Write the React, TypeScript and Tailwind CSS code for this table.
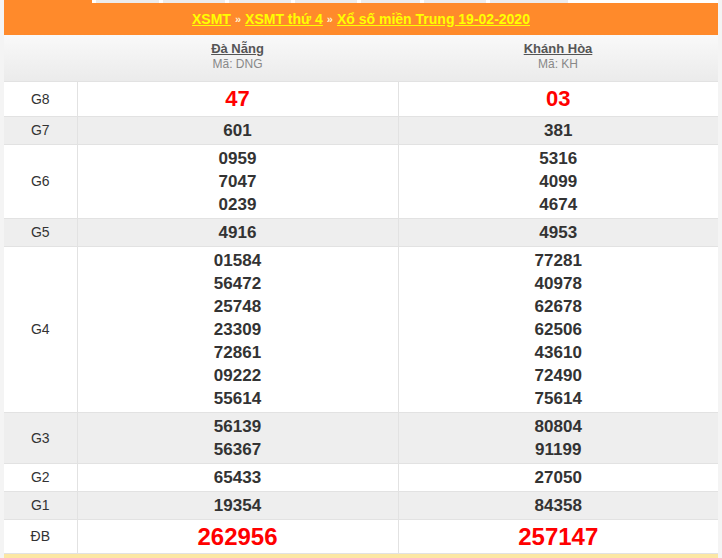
import React from 'react';

type Row = { label: string; a: string[]; b: string[]; big?: 'g8' | 'db' };

const rows: Row[] = [
  { label: 'G8', a: ['47'], b: ['03'], big: 'g8' },
  { label: 'G7', a: ['601'], b: ['381'] },
  { label: 'G6', a: ['0959', '7047', '0239'], b: ['5316', '4099', '4674'] },
  { label: 'G5', a: ['4916'], b: ['4953'] },
  {
    label: 'G4',
    a: ['01584', '56472', '25748', '23309', '72861', '09222', '55614'],
    b: ['77281', '40978', '62678', '62506', '43610', '72490', '75614'],
  },
  { label: 'G3', a: ['56139', '56367'], b: ['80804', '91199'] },
  { label: 'G2', a: ['65433'], b: ['27050'] },
  { label: 'G1', a: ['19354'], b: ['84358'] },
  { label: 'ĐB', a: ['262956'], b: ['257147'], big: 'db' },
];

const tabs = [
  'w-[63px]', 'w-[62px]', 'w-[62px]', 'w-[62px]', 'w-[59px]', 'w-[62px]', 'w-[78px]',
];

function Numbers({ values, big }: { values: string[]; big?: 'g8' | 'db' }) {
  if (big === 'g8') {
    return <div className="text-[22px] leading-[30px] font-bold text-[#ff0000]">{values[0]}</div>;
  }
  if (big === 'db') {
    return <div className="text-[24px] leading-[29px] font-bold text-[#ff0000]">{values[0]}</div>;
  }
  return (
    <div className="text-[17px] leading-[23px] font-bold text-[#333333]">
      {values.map((v, i) => (
        <div key={i}>{v}</div>
      ))}
    </div>
  );
}

export default function App() {
  return (
    <div className="w-[722px] h-[558px] overflow-hidden bg-[#f4f4f4] px-[4px] font-['Liberation_Sans',Arial,sans-serif]">
      {/* Tab strip */}
      <div className="h-[3px] flex bg-white">
        <div className="w-[88px] bg-[#ff8a2b]" />
        {tabs.map((w, i) => (
          <div key={i} className={`${w} ml-[4px] bg-[#ececec]`} />
        ))}
      </div>

      {/* Breadcrumb header */}
      <div className="h-[32px] bg-[#ff8a2b] flex items-center justify-center gap-[4px] text-[14px] font-bold">
        <span className="underline text-[#ffff00]">XSMT</span>
        <span className="text-[#fff0d0] text-[11px]">»</span>
        <span className="underline text-[#ffff00]">XSMT thứ 4</span>
        <span className="text-[#fff0d0] text-[11px]">»</span>
        <span className="underline text-[#ffff00]">Xổ số miền Trung 19-02-2020</span>
      </div>

      <table className="w-[714px] border-collapse table-fixed bg-white">
        <colgroup>
          <col className="w-[73px]" />
          <col className="w-[321px]" />
          <col className="w-[320px]" />
        </colgroup>
        <thead>
          <tr className="bg-gradient-to-b from-[#f9f9f9] to-[#ebebeb] border-b border-[#dedede]">
            <th className="h-[46px]" />
            <th className="pt-[6px] pb-[9px] font-normal text-center">
              <div className="text-[13px] leading-[16px] font-bold text-[#555555] underline">Đà Nẵng</div>
              <div className="text-[12px] leading-[15px] text-[#888888]">Mã: DNG</div>
            </th>
            <th className="pt-[6px] pb-[9px] font-normal text-center">
              <div className="text-[13px] leading-[16px] font-bold text-[#555555] underline">Khánh Hòa</div>
              <div className="text-[12px] leading-[15px] text-[#888888]">Mã: KH</div>
            </th>
          </tr>
        </thead>
        <tbody>
          {rows.map((r, i) => (
            <tr key={r.label} className={i % 2 === 1 ? 'bg-[#eeeeee]' : 'bg-white'}>
              <td className="border border-[#e2e2e2] border-l-0 text-center text-[14px] text-[#333333]">
                {r.label}
              </td>
              <td className="border border-[#e2e2e2] text-center py-[2px]">
                <Numbers values={r.a} big={r.big} />
              </td>
              <td className="border border-[#e2e2e2] border-r-0 text-center py-[2px]">
                <Numbers values={r.b} big={r.big} />
              </td>
            </tr>
          ))}
        </tbody>
      </table>
      <div className="h-[10px] bg-[#fce7a4]" />
    </div>
  );
}
